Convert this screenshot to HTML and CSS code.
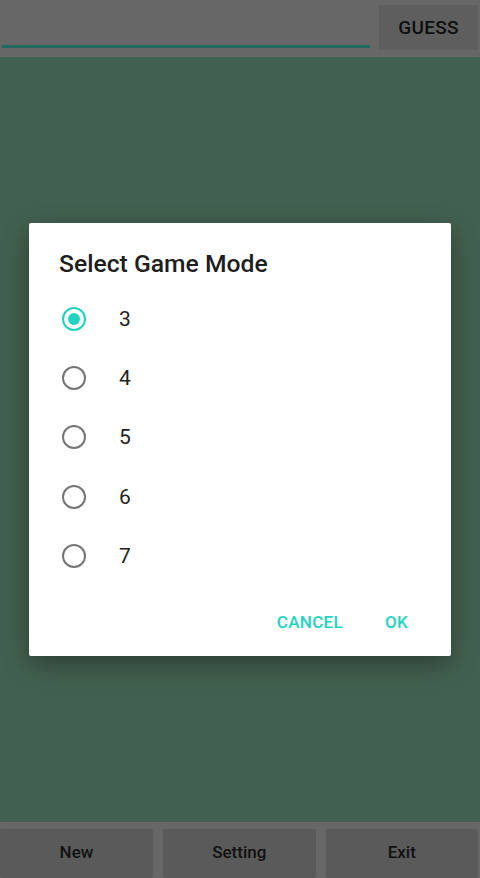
FILE: index.html
```html
<!DOCTYPE html>
<html>
<head>
<meta charset="utf-8">
<link rel="stylesheet" href="styles.css">
</head>
<body>
<div class="app">
  <div class="topbar">
    <div class="field"><div class="underline"></div></div>
    <div class="guess">GUESS</div>
  </div>
  <div class="main"></div>
  <div class="bottombar">
    <div class="btn">New</div>
    <div class="btn">Setting</div>
    <div class="btn">Exit</div>
  </div>
  <div class="dialog">
    <div class="title">Select Game Mode</div>
    <div class="options">
      <div class="option"><span class="radio checked"></span><span class="label">3</span></div>
      <div class="option"><span class="radio"></span><span class="label">4</span></div>
      <div class="option"><span class="radio"></span><span class="label">5</span></div>
      <div class="option"><span class="radio"></span><span class="label">6</span></div>
      <div class="option"><span class="radio"></span><span class="label">7</span></div>
    </div>
    <div class="actions">
      <span class="action">CANCEL</span>
      <span class="action">OK</span>
    </div>
  </div>
</div>
</body>
</html>
```
FILE: styles.css
```css
html, body { margin: 0; padding: 0; }
body { width: 480px; height: 878px; overflow: hidden; font-family: Roboto, "Noto Sans", sans-serif; }
.app { position: relative; width: 480px; height: 878px; display: flex; flex-direction: column; background: #42604f; }
.topbar { height: 57px; background: #676767; display: flex; align-items: flex-start; }
.field { flex: 1; height: 57px; position: relative; }
.underline { position: absolute; left: 2px; right: 9px; top: 45px; height: 3px; background: #1f6a5d; }
.guess { width: 99px; height: 45px; margin: 5px 2px 0 0; background: #5e5e5e; color: #0e0e0e; font-size: 19px; font-weight: 500; display: flex; align-items: center; justify-content: center; letter-spacing: 0.3px; }
.main { flex: 1; }
.bottombar { height: 56px; background: #676767; display: flex; gap: 10px; padding: 7px 2px 0 0; box-sizing: border-box; }
.btn { flex: 1; background: #5a5a5a; color: #111; font-size: 17px; font-weight: 500; display: flex; align-items: center; justify-content: center; padding-bottom: 4px; border-radius: 2px; }
.btn:first-child { flex: 0 0 153px; }
.dialog { position: absolute; left: 29px; top: 223px; width: 422px; height: 433px; background: #fff; border-radius: 2px; box-shadow: 0 8px 24px rgba(0,0,0,0.35); box-sizing: border-box; padding: 26px 0 0 30px; display: flex; flex-direction: column; }
.title { font-size: 24.7px; color: #1e1e1e; font-weight: 500; line-height: 30px; height: 30px; }
.options { display: flex; flex-direction: column; margin-top: 10px; }
.option { height: 59.3px; display: flex; align-items: center; }
.radio { width: 20px; height: 20px; border: 2px solid #757575; border-radius: 50%; margin-left: 3px; position: relative; box-sizing: content-box; }
.radio.checked { border-color: #1fd4bf; }
.radio.checked::after { content: ""; position: absolute; left: 4px; top: 4px; width: 12px; height: 12px; border-radius: 50%; background: #1fd4bf; }
.label { margin-left: 33px; font-size: 21px; color: #222; }
.actions { display: flex; justify-content: flex-end; gap: 42px; margin-top: 27px; padding-right: 43px; }
.action { color: #1fd4bf; font-size: 17px; font-weight: 500; letter-spacing: 0.3px; }
```
